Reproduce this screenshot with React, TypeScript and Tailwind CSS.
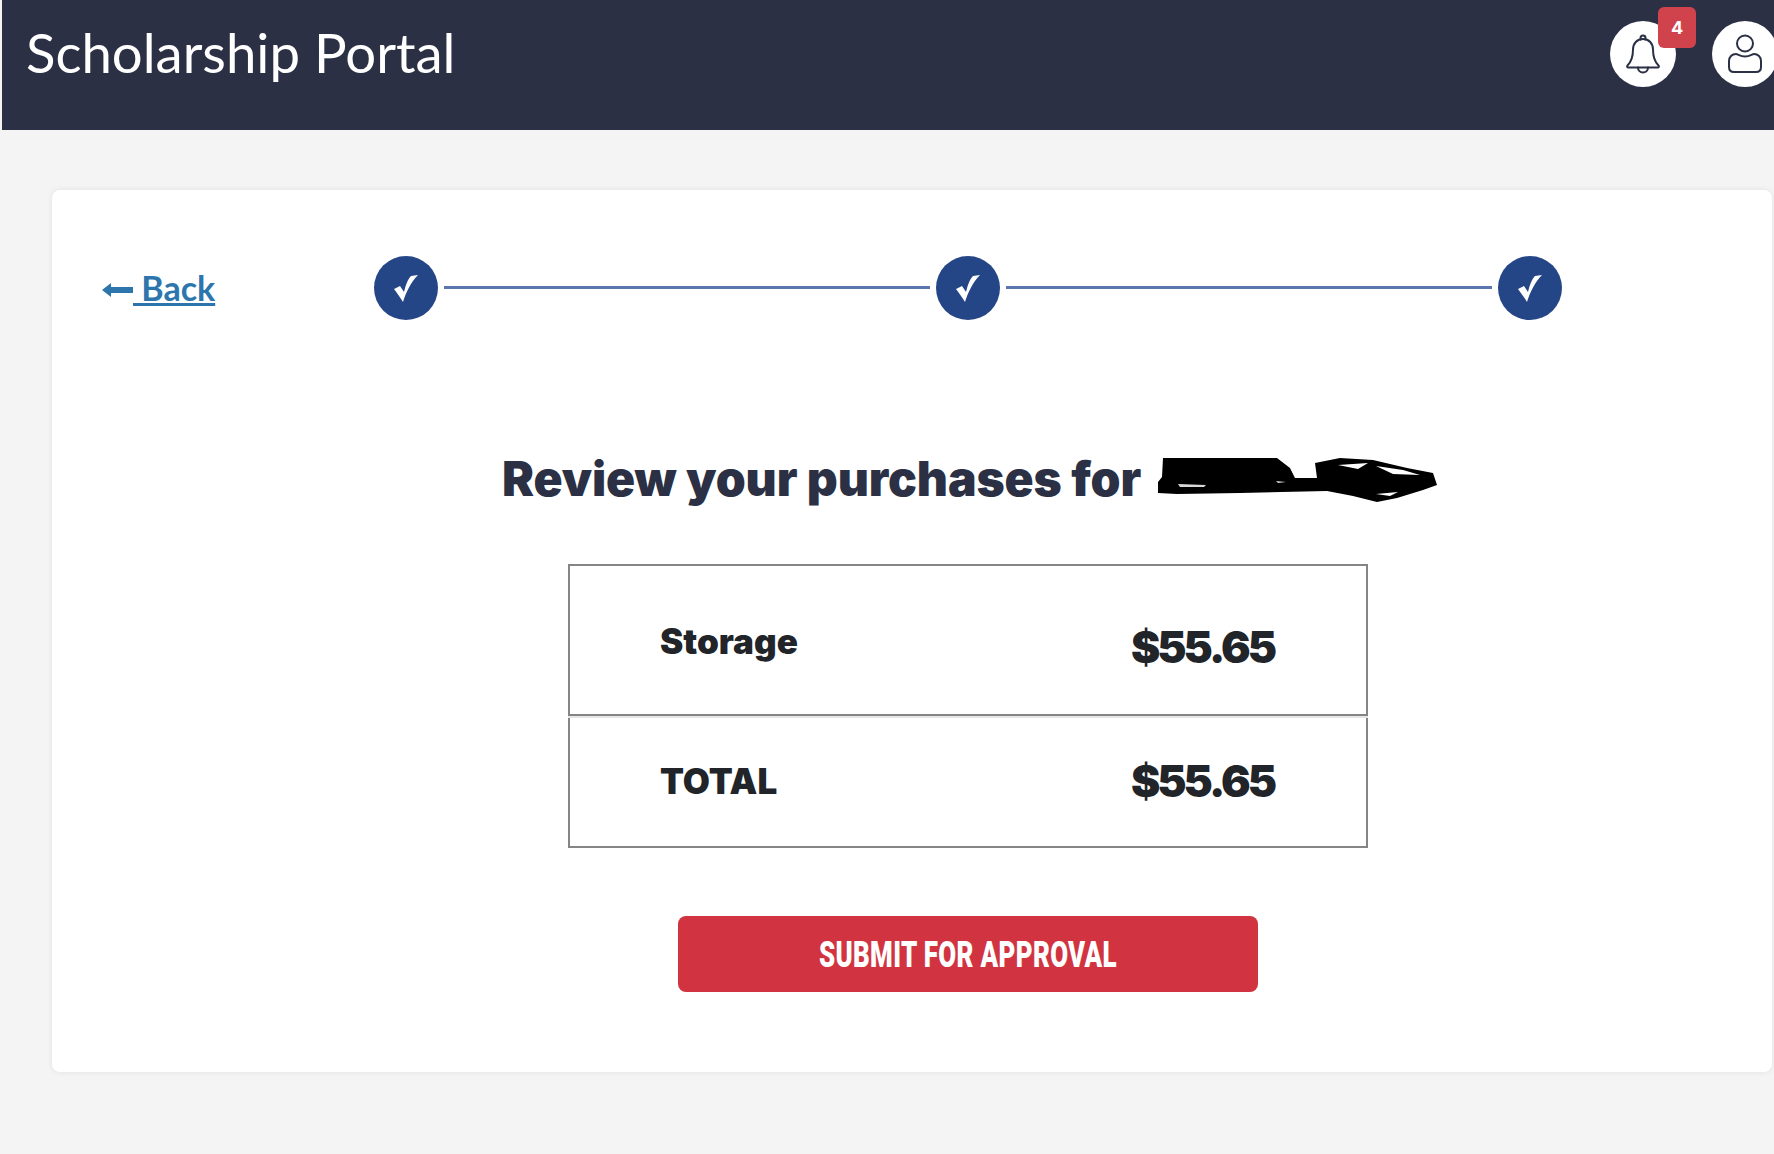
function BellIcon() {
  return (
    <svg className="h-[40px] w-[36px]" viewBox="0 0 36 40" fill="none" stroke="#2b3044" strokeWidth="2" strokeLinejoin="round" strokeLinecap="round">
      <path d="M15.500 5.500V4a2.500 2.500 0 0 1 5 0v1.500" />
      <path d="M18 5c-6 0-10 4.500-10 10.500 0 9-2 12.500-5.500 16-.8.9-.4 2 .8 2h29.400c1.200 0 1.600-1.100.8-2-3.500-3.500-5.500-7-5.500-16C28 9.500 24 5 18 5Z" />
      <path d="M13 33.500c0 3 2.200 5 5 5s5-2 5-5" />
    </svg>
  );
}

function UserIcon() {
  return (
    <svg className="h-[40px] w-[34px]" viewBox="0 0 34 40" fill="none" stroke="#2b3044" strokeWidth="2" strokeLinejoin="round">
      <circle cx="17" cy="9.500" r="8" />
      <path d="M8 20c-4 0-7 3-7 7v6c0 3 2 5 5 5h22c3 0 5-2 5-5v-6c0-4-3-7-7-7-2 0-4 2.500-9 2.500S10 20 8 20Z" />
    </svg>
  );
}

function StepCheck() {
  return (
    <div className="flex h-16 w-16 shrink-0 items-center justify-center rounded-full bg-[#254686]">
      <svg className="h-[28px] w-[24px]" viewBox="0 0 24 28" fill="white">
        <path d="M0 15 6 12 10 18C12 10 14 5 17 2L24 1C17 8 12 18 9 28 6 23 3 19 0 15Z" />
      </svg>
    </div>
  );
}

function Row({ label, amount, className, amountClass }: { label: string; amount: string; className: string; amountClass: string }) {
  return (
    <div className={`flex justify-between border-2 border-[#858585] pl-[90px] pr-[92px] text-[#212429] ${className}`}>
      <span className="text-[35px] leading-[50px] font-black">{label}</span>
      <span className={`text-[44px] leading-[54px] font-black tracking-[-3px] ${amountClass}`}>{amount}</span>
    </div>
  );
}

export default function App() {
  return (
    <div className="h-[1154px] w-[1774px] overflow-hidden bg-[#f4f4f4] pl-[2px] font-['Inter',sans-serif]">
      <header className="flex h-[130px] items-start justify-between bg-[#2b3044] pl-[24px] text-white">
        <h1 className="mt-[20px] font-['Lato',sans-serif] text-[54.500px] leading-[64px]">Scholarship Portal</h1>
        <div className="mr-[-4px] mt-[21px] flex gap-[36px]">
          <div className="relative flex h-[66px] w-[66px] items-center justify-center rounded-full bg-white">
            <BellIcon />
            <span className="absolute left-[48px] top-[-14px] flex h-[41px] w-[38px] items-center justify-center rounded-[6px] bg-[#d0434d] text-[18px] font-bold text-white">4</span>
          </div>
          <div className="flex h-[66px] w-[66px] items-center justify-center rounded-full bg-white">
            <UserIcon />
          </div>
        </div>
      </header>

      <main className="ml-[50px] mt-[60px] h-[882px] w-[1720px] rounded-[8px] bg-white pt-[66px] shadow-[0_0_6px_rgba(0,0,0,0.08)]">
        <div className="flex items-start">
          <a className="ml-[50px] mt-[10px] flex w-[272px] items-end font-['Lato',sans-serif] text-[34px] leading-[44px] font-bold text-[#2d76ad]">
            <svg className="mb-[13px] h-[14px] w-[31px]" viewBox="0 0 31 14" fill="#2d76ad">
              <path d="M0 7 9 0v4h22v6H9v4Z" />
            </svg>
            <span className="underline decoration-[3px] underline-offset-[2px]">&nbsp;Back</span>
          </a>
          <div className="flex items-center gap-[6px]">
            <StepCheck />
            <div className="mb-[2px] h-[3px] w-[486px] bg-[#5b76ad]" />
            <StepCheck />
            <div className="mb-[2px] h-[3px] w-[486px] bg-[#5b76ad]" />
            <StepCheck />
          </div>
        </div>

        <div className="relative ml-[450px] mt-[129px] w-fit">
          <h2 className="whitespace-nowrap text-[48px] leading-[60px] font-black tracking-[-0.1px] text-[#2b3044]">
            Review your purchases for
          </h2>
          <svg className="absolute left-[656px] top-[7px] h-[48px] w-[280px]" viewBox="0 0 280 48" fill="#000">
            <path d="M5 2 119 2 132 12 137 22 159 22 157 7 182 2 215 4 249 12 275 17 279 29 265 34 239 42 219 46 195 40 169 35 82 37 19 38 0 37 0 26 4 21Z" />
            <path d="M180 9 210 7 200 13ZM218 10 245 14 262 19 235 18ZM218 38 240 36 232 40Z" fill="#fff" />
            <path d="M20 28 48 29 46 31 22 31ZM118 25 128 26 120 27Z" fill="#d8d8d8" />
          </svg>
        </div>

        <div className="ml-[516px] mt-[55px] w-[800px]">
          <Row label="Storage" amount="$55.65" className="h-[152px] pt-[50px] shadow-[0_2px_0_#e6e6e6]" amountClass="mt-[4px]" />
          <Row label="TOTAL" amount="$55.65" className="mt-[2px] h-[130px] border-t-0 pt-[38px]" amountClass="mt-[-2px]" />
        </div>

        <button className="ml-[626px] mt-[68px] flex h-[76px] w-[580px] items-center justify-center rounded-[8px] bg-[#d13440] text-white">
          <span className="mt-[2px] scale-x-[0.7] whitespace-nowrap font-['Roboto',sans-serif] text-[37px] font-black tracking-[0.5px]">SUBMIT FOR APPROVAL</span>
        </button>
      </main>
    </div>
  );
}
